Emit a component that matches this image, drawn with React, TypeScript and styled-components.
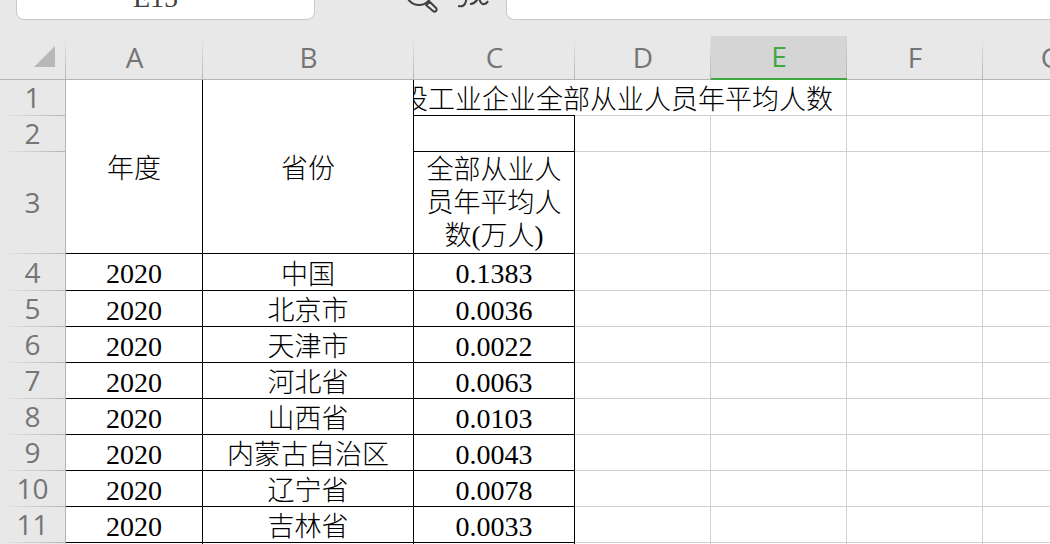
import React from 'react';
import styled, { createGlobalStyle, css } from 'styled-components';

const GRID = '#d0d0d0';
const RULE = '#000000';
const HEAD = '#b4b4b4';

const GlobalStyle = createGlobalStyle`
  *, *::before, *::after { box-sizing: border-box; }
  body { margin: 0; background: #ffffff; }
`;

const Sheet = styled.main`
  height: 100vh;
  overflow: hidden;
  background: #ffffff;
  color: #000000;
  font-family: 'Liberation Serif', 'Noto Sans CJK SC', serif;
`;

const FormulaBar = styled.header`
  display: flex;
  align-items: flex-end;
  height: 36px;
  padding: 0 0 16px 16px;
  overflow: hidden;
  background: #e8e8e8;
`;

const fieldStyle = css`
  height: 44px;
  border: 1px solid #c8c8c8;
  background: #ffffff;
  color: #404040;
  font-family: inherit;
  font-size: 28px;
  outline: none;
`;

const NameBox = styled.input`
  ${fieldStyle}
  flex: none;
  width: 299px;
  padding: 0 20px 0 0;
  border-radius: 8px;
  text-align: center;
`;

const FormulaInput = styled.input`
  ${fieldStyle}
  flex: 1;
  min-width: 0;
  padding: 0 12px;
  border-radius: 8px 0 0 8px;
  border-right: 0;
`;

const Tools = styled.div`
  display: flex;
  justify-content: flex-end;
  gap: 20px;
  flex: none;
  width: 191px;
  height: 44px;
  padding-right: 16px;
`;

const ToolButton = styled.button`
  display: flex;
  align-items: center;
  padding: 0;
  border: 0;
  background: none;
  color: #404040;
`;

const Grid = styled.table`
  width: 100%;
  min-width: 1119px;
  table-layout: fixed;
  border-collapse: separate;
  border-spacing: 0;
`;

const Col = styled.col<{ $width?: number }>`
  width: ${({ $width }) => ($width ? `${$width}px` : 'auto')};
`;

const headFont = css`
  padding: 0 0 2px;
  color: #757575;
  font-family: 'Open Sans', sans-serif;
  font-size: 28px;
  font-weight: 400;
  line-height: 32px;
  text-align: center;
`;

const ColumnHead = styled.th<{ $active?: boolean }>`
  ${headFont}
  height: 44px;
  border-bottom: 1px solid ${HEAD};
  background:
    linear-gradient(to bottom, #e8e8e8, ${HEAD}) right / 1px 100% no-repeat,
    #e8e8e8;
  ${({ $active }) =>
    $active &&
    css`
      border-bottom: 2px solid #40a840;
      background:
        linear-gradient(to bottom, #d5d5d5, ${HEAD}) right / 1px 100% no-repeat,
        #d5d5d5;
      color: #40a840;
    `}
`;

const Corner = styled(ColumnHead)`
  padding-right: 11px;
  text-align: right;
  line-height: 0;
`;

const RowHead = styled.th`
  ${headFont}
  border-right: 1px solid ${HEAD};
  background:
    linear-gradient(to right, #e8e8e8, ${HEAD}) bottom / 100% 1px no-repeat,
    #e8e8e8;
`;

const Row = styled.tr<{ $height: number }>`
  height: ${({ $height }) => $height}px;
`;

const Cell = styled.td<{ $ruled?: boolean; $open?: boolean; $number?: boolean }>`
  padding: ${({ $number }) => ($number ? 4 : 5)}px 0 0;
  border: 0 solid ${({ $ruled }) => ($ruled ? RULE : GRID)};
  border-right-width: ${({ $open }) => ($open ? 0 : 1)}px;
  border-bottom-width: 1px;
  font-size: ${({ $number }) => ($number ? 28 : 27)}px;
  font-weight: ${({ $number }) => ($number ? 400 : 300)};
  line-height: 30px;
  text-align: center;
`;

const WrappedCell = styled(Cell)`
  padding-top: 2px;
  line-height: 33px;
`;

const Spill = styled.div`
  display: flex;
  justify-content: flex-end;
  width: 419px;
  overflow: hidden;
  white-space: nowrap;
`;

const COLUMNS = ['A', 'B', 'C', 'D', 'E', 'F', 'G'];
const WIDTHS = [66, 137, 211, 161, 136, 136, 136];

const DATA = [
  ['2020', '中国', '0.1383'],
  ['2020', '北京市', '0.0036'],
  ['2020', '天津市', '0.0022'],
  ['2020', '河北省', '0.0063'],
  ['2020', '山西省', '0.0103'],
  ['2020', '内蒙古自治区', '0.0043'],
  ['2020', '辽宁省', '0.0078'],
  ['2020', '吉林省', '0.0033'],
];

const Blank = ({ count }: { count: number }) => (
  <>
    {Array.from({ length: count }, (_, i) => (
      <Cell key={i} />
    ))}
  </>
);

const SearchIcon = () => (
  <svg width="32" height="36" viewBox="0 0 32 36" fill="none" stroke="currentColor" strokeWidth="2">
    <circle cx="13" cy="12" r="13" />
    <path d="M20 25l4-3 6 6a2 2 0 0 1-3 3z" strokeLinejoin="round" />
  </svg>
);

const FunctionIcon = () => (
  <svg width="32" height="36" viewBox="0 0 32 36" fill="none" stroke="currentColor" strokeWidth="2">
    <path d="M16 3c-5-2-6 3-6 7L8 21c-1 5-4 6-8 5M5 11h10" />
    <path d="M14 9c7-3 6 17 12 15 2 0 3-1 4-3M29 9c-6 0-9 16-17 15" />
  </svg>
);

export default function App() {
  return (
    <Sheet>
      <GlobalStyle />
      <FormulaBar>
        <NameBox aria-label="Name box" defaultValue="E15" />
        <Tools>
          <ToolButton aria-label="Search">
            <SearchIcon />
          </ToolButton>
          <ToolButton aria-label="Insert function">
            <FunctionIcon />
          </ToolButton>
        </Tools>
        <FormulaInput aria-label="Formula" />
      </FormulaBar>
      <Grid>
        <colgroup>
          {WIDTHS.map((width, i) => (
            <Col key={i} $width={width} />
          ))}
          <Col />
        </colgroup>
        <thead>
          <tr>
            <Corner aria-label="Select all">
              <svg width="21" height="21" viewBox="0 0 21 21" fill="#b8b8b8">
                <path d="M21 0v21H0z" />
              </svg>
            </Corner>
            {COLUMNS.map((name) => (
              <ColumnHead key={name} scope="col" $active={name === 'E'}>
                {name}
              </ColumnHead>
            ))}
          </tr>
        </thead>
        <tbody>
          <Row $height={36}>
            <RowHead scope="row">1</RowHead>
            <Cell $ruled rowSpan={3}>年度</Cell>
            <Cell $ruled rowSpan={3}>省份</Cell>
            <Cell $ruled $open>
              <Spill>设工业企业全部从业人员年平均人数</Spill>
            </Cell>
            <Cell $open />
            <Blank count={3} />
          </Row>
          <Row $height={36}>
            <RowHead scope="row">2</RowHead>
            <Cell $ruled />
            <Blank count={4} />
          </Row>
          <Row $height={102}>
            <RowHead scope="row">3</RowHead>
            <WrappedCell $ruled>
              全部从业人
              <br />
              员年平均人
              <br />
              数(万人)
            </WrappedCell>
            <Blank count={4} />
          </Row>
          {DATA.map(([year, region, value], i) => (
            <Row key={i} $height={i === 0 ? 37 : 36}>
              <RowHead scope="row">{i + 4}</RowHead>
              <Cell $ruled $number>{year}</Cell>
              <Cell $ruled>{region}</Cell>
              <Cell $ruled $number>{value}</Cell>
              <Blank count={4} />
            </Row>
          ))}
          <Row $height={36}>
            <RowHead />
            <Cell $ruled />
            <Cell $ruled />
            <Cell $ruled />
            <Blank count={4} />
          </Row>
        </tbody>
      </Grid>
    </Sheet>
  );
}
